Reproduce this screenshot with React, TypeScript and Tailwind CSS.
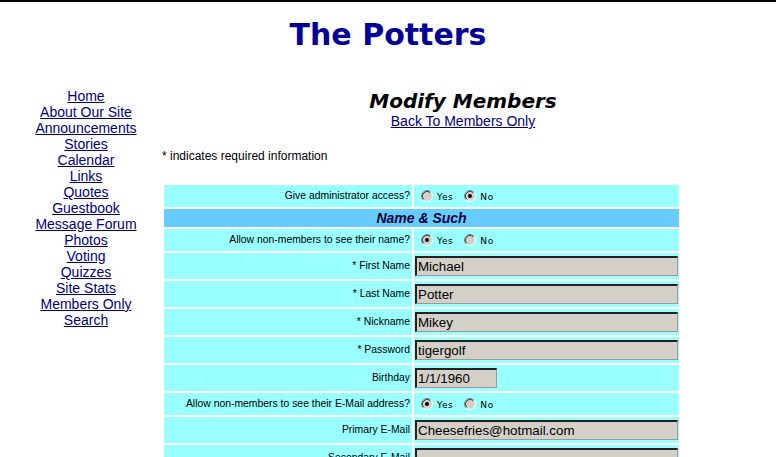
import React from "react";

type Row =
  | { kind: "radio"; label: string; yes: boolean }
  | { kind: "header"; label: string }
  | { kind: "text"; label: string; value: string; short?: boolean };

const navLinks = [
  "Home",
  "About Our Site",
  "Announcements",
  "Stories",
  "Calendar",
  "Links",
  "Quotes",
  "Guestbook",
  "Message Forum",
  "Photos",
  "Voting",
  "Quizzes",
  "Site Stats",
  "Members Only",
  "Search",
];

const rows: Row[] = [
  { kind: "radio", label: "Give administrator access?", yes: false },
  { kind: "header", label: "Name & Such" },
  { kind: "radio", label: "Allow non-members to see their name?", yes: true },
  { kind: "text", label: "* First Name", value: "Michael" },
  { kind: "text", label: "* Last Name", value: "Potter" },
  { kind: "text", label: "* Nickname", value: "Mikey" },
  { kind: "text", label: "* Password", value: "tigergolf" },
  { kind: "text", label: "Birthday", value: "1/1/1960", short: true },
  { kind: "radio", label: "Allow non-members to see their E-Mail address?", yes: true },
  { kind: "text", label: "Primary E-Mail", value: "Cheesefries@hotmail.com" },
  { kind: "text", label: "Secondary E-Mail", value: "" },
  { kind: "text", label: "Home Phone", value: "" },
];

function Radio({ on }: { on: boolean }) {
  return (
    <svg width="12" height="12" viewBox="0 0 12 12" className="shrink-0">
      <circle cx="6" cy="6" r="5" fill="#d4d0c8" />
      <path d="M2.11 9.89A5.5 5.5 0 0 1 9.89 2.11" fill="none" stroke="#808080" />
      <path d="M9.89 2.11A5.5 5.5 0 0 1 2.11 9.89" fill="none" stroke="#ffffff" />
      <path d="M2.82 9.18A4.5 4.5 0 0 1 9.18 2.82" fill="none" stroke="#404040" />
      {on && <circle cx="6" cy="6" r="2" fill="#000" />}
    </svg>
  );
}

function FormRow({ row }: { row: Row }) {
  if (row.kind === "header") {
    return (
      <div className="col-span-2 h-[18px] bg-[#66ccff] flex items-center justify-center text-[14px] font-bold italic text-[#000033]">
        {row.label}
      </div>
    );
  }
  const h = row.kind === "radio" ? "h-[22px]" : "h-[26px]";
  return (
    <>
      <div className={`${h} bg-[#99ffff] flex items-center justify-end pr-[2px] text-[10.4px] text-black`}>
        {row.label}
      </div>
      <div className={`${h} bg-[#99ffff] flex items-center`}>
        {row.kind === "radio" ? (
          <div className="flex items-center pl-[7px] font-['DejaVu_Sans',sans-serif] text-[9px] tracking-[0.6px]">
            <Radio on={row.yes} />
            <span className="ml-[4px] mt-[4px]">Yes</span>
            <span className="ml-[11px]">
              <Radio on={!row.yes} />
            </span>
            <span className="ml-[4px] mt-[4px]">No</span>
          </div>
        ) : (
          <input
            readOnly
            value={row.value}
            className={`${row.short ? "w-[82px]" : "w-[263px]"} ml-[1px] h-[20px] bg-[#d4d0c8] border-t-2 border-l-2 border-r border-b border-t-[#222] border-l-[#222] border-r-[#999] border-b-[#999] pl-[1px] text-[13.33px] text-black outline-none`}
          />
        )}
      </div>
    </>
  );
}

export default function App() {
  return (
    <div className="h-[457px] overflow-hidden bg-white border-t-2 border-black font-['Liberation_Sans',Arial,sans-serif]">
      <h1 className="mt-[15px] text-center text-[30px] leading-[35px] font-bold text-[#000099] font-['DejaVu_Sans',sans-serif]">
        The Potters
      </h1>

      <div className="flex mt-[36px]">
        {/* left nav */}
        <nav className="w-[162px] shrink-0 pl-[10px] flex flex-col items-center text-[14px] leading-[16px]">
          {navLinks.map((l) => (
            <a key={l} href="#" className="text-[#000080] underline">
              {l}
            </a>
          ))}
        </nav>

        {/* main */}
        <main className="flex-1 pr-[12px] mt-[2px]">
          <div className="flex flex-col items-center">
            <h2 className="text-[20px] leading-[23px] font-bold italic text-black font-['DejaVu_Sans',sans-serif]">
              Modify Members
            </h2>
            <a href="#" className="text-[14px] leading-[16px] text-[#000080] underline">
              Back To Members Only
            </a>
          </div>
          <p className="mt-[20px] text-[12px] leading-[14px] text-black">* indicates required information</p>

          <div className="mt-[20px] w-[519px] grid grid-cols-[248px_265px] gap-[2px] p-[2px] bg-white">
            {rows.map((r, i) => (
              <FormRow key={i} row={r} />
            ))}
          </div>
        </main>
      </div>
    </div>
  );
}
